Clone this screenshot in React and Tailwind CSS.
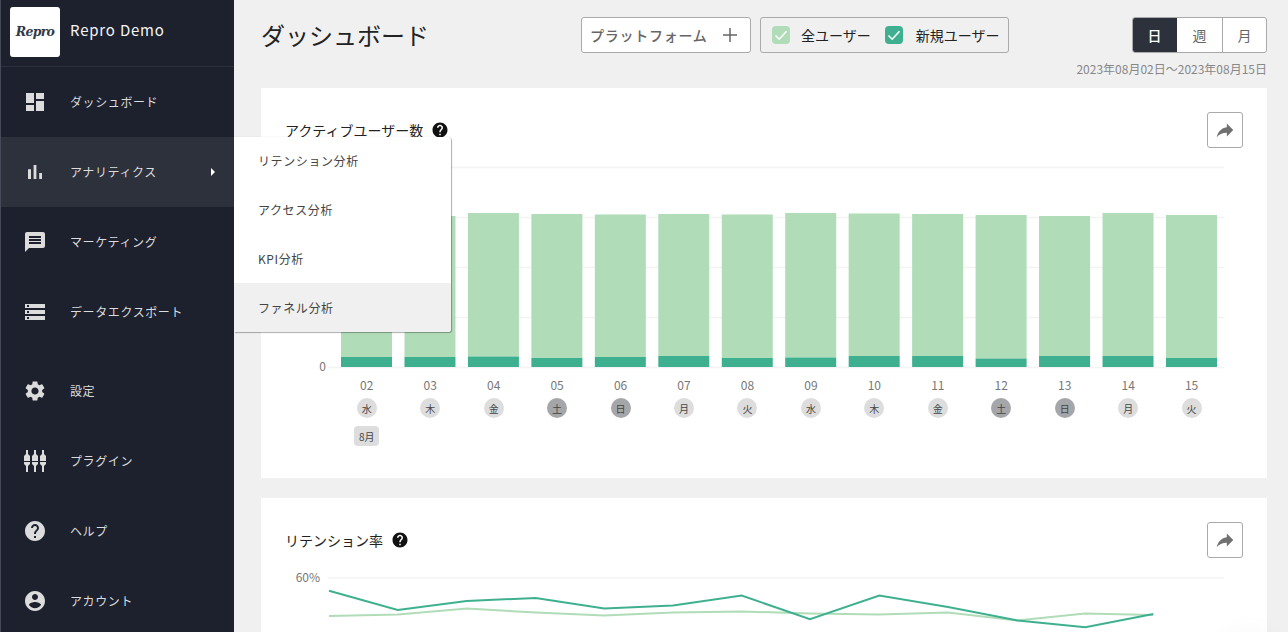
const P = {
  dashboard: "M3 13h8V3H3v10zm0 8h8v-6H3v6zm10 0h8V11h-8v10zm0-18v6h8V3h-8z",
  bars: "M5 9.2h3V19H5zM10.6 5h2.8v14h-2.8zm5.6 8H19v6h-2.8z",
  chat: "M20 2H4c-1.1 0-1.99.9-1.99 2L2 22l4-4h14c1.1 0 2-.9 2-2V4c0-1.1-.9-2-2-2zM6 12h12v2H6v-2zm0-3h12v2H6V9zm0-3h12v2H6V6z",
  storage: "M2 20h20v-4H2v4zm2-3h2v2H4v-2zM2 4v4h20V4H2zm4 3H4V5h2v2zm-4 7h20v-4H2v4zm2-3h2v2H4v-2z",
  gear: "M19.14 12.94c.04-.3.06-.61.06-.94 0-.32-.02-.64-.07-.94l2.03-1.58c.18-.14.23-.41.12-.61l-1.92-3.32c-.12-.22-.37-.29-.59-.22l-2.39.96c-.5-.38-1.03-.7-1.62-.94l-.36-2.54c-.04-.24-.24-.41-.48-.41h-3.84c-.24 0-.43.17-.47.41l-.36 2.54c-.59.24-1.13.57-1.62.94l-2.39-.96c-.22-.08-.47 0-.59.22L2.74 8.87c-.12.21-.08.47.12.61l2.03 1.58c-.05.3-.09.63-.09.94s.02.64.07.94l-2.03 1.58c-.18.14-.23.41-.12.61l1.92 3.32c.12.22.37.29.59.22l2.39-.96c.5.38 1.03.7 1.62.94l.36 2.54c.05.24.24.41.48.41h3.84c.24 0 .44-.17.47-.41l.36-2.54c.59-.24 1.13-.56 1.62-.94l2.39.96c.22.08.47 0 .59-.22l1.92-3.32c.12-.22.07-.47-.12-.61l-2.01-1.58zM12 15.6c-1.98 0-3.6-1.62-3.6-3.6s1.62-3.6 3.6-3.6 3.6 1.62 3.6 3.6-1.62 3.6-3.6 3.6z",
  plugin: "M3 1h2v4H3zM11 1h2v4h-2zM19 1h2v4h-2zM1 7l2-2h2l2 2v5H1zM9 7l2-2h2l2 2v5H9zM17 7l2-2h2l2 2v5h-6zM1 13h6v2l-2 2v6H3v-6l-2-2zM9 13h6v2l-2 2v6h-2v-6l-2-2zM17 13h6v2l-2 2v6h-2v-6l-2-2z",
  help: "M12 2C6.48 2 2 6.48 2 12s4.48 10 10 10 10-4.48 10-10S17.52 2 12 2zm1 17h-2v-2h2v2zm2.07-7.75l-.9.92C13.45 12.9 13 13.5 13 15h-2v-.5c0-1.1.45-2.1 1.17-2.83l1.24-1.26c.37-.36.59-.86.59-1.41 0-1.1-.9-2-2-2s-2 .9-2 2H8c0-2.21 1.79-4 4-4s4 1.79 4 4c0 .88-.36 1.68-.93 2.25z",
  account: "M12 2C6.48 2 2 6.48 2 12s4.48 10 10 10 10-4.48 10-10S17.52 2 12 2zm0 3c1.66 0 3 1.34 3 3s-1.34 3-3 3-3-1.34-3-3 1.34-3 3-3zm0 14.2c-2.5 0-4.71-1.28-6-3.22.03-1.99 4-3.08 6-3.08 1.99 0 5.97 1.09 6 3.08-1.29 1.94-3.5 3.22-6 3.22z",
  share: "M14 9V5l7 7-7 7v-4.1c-5 0-8.5 1.6-11 5.1 1-5 4-10 11-11z",
};

function Icon({ d, className = "w-6 h-6" }) {
  return (
    <svg viewBox="0 0 24 24" className={className} fill="currentColor">
      <path d={d} />
    </svg>
  );
}

function NavItem({ icon, label, active, arrow }) {
  return (
    <div className={`h-[70px] shrink-0 flex items-center pl-[22px] pr-5 text-[#dcdcdc] ${active ? "bg-[#2d313c]" : ""}`}>
      <Icon d={icon} />
      <span className="ml-[23px] text-xs tracking-[0.6px] flex-1">{label}</span>
      {arrow && (
        <svg viewBox="0 0 4 8" className="w-1 h-2 -mr-[1px]" fill="#ffffff">
          <path d="M0 0l4 4-4 4z" />
        </svg>
      )}
    </div>
  );
}

function Check({ color }) {
  return (
    <span className={`w-[18px] h-[18px] rounded-sm flex items-center justify-center ${color}`}>
      <svg viewBox="0 0 18 18" className="w-[18px] h-[18px]" fill="none" stroke="#ffffff" strokeWidth="1.6">
        <path d="M3.5 9.5l3.7 3.7 7.3-8" />
      </svg>
    </span>
  );
}

function CardHead({ title }) {
  return (
    <div className="flex items-center pl-6 pr-6 pt-6 h-[60px]">
      <span className="text-sm text-[#222222]">{title}</span>
      <Icon d={P.help} className="w-[18px] h-[18px] ml-2 text-[#111111]" />
      <button className="ml-auto w-9 h-9 bg-white border border-[#aaaaaa] rounded-[3px] flex items-center justify-center text-[#707070]">
        <Icon d={P.share} className="w-[22px] h-[22px]" />
      </button>
    </div>
  );
}

const tops = [216, 216, 213, 214, 214.5, 214, 214.5, 213, 213.5, 214, 215, 216, 213, 215];
const mids = [357, 357, 356.5, 358, 357, 356, 358, 357.5, 356, 356, 358.5, 356, 356, 358];
const days = ["02", "03", "04", "05", "06", "07", "08", "09", "10", "11", "12", "13", "14", "15"];
const wd = ["水", "木", "金", "土", "日", "月", "火", "水", "木", "金", "土", "日", "月", "火"];

const green = "329,590.7 397.7,610 466.7,601 535.7,598 604.3,608.5 673,605.5 741.7,595.5 810,619.3 879.3,595.5 948,607 1017.7,620.5 1085.3,627.3 1153.3,614";
const light = "329,616 398,614.5 467,608.5 536,612.5 604,615.5 673,612.5 742,611.5 810,613.5 879,614.5 948,612.5 1017,620.5 1085,613.5 1153,615";

const nav1 = [
  { icon: P.dashboard, label: "ダッシュボード" },
  { icon: P.bars, label: "アナリティクス", active: true, arrow: true },
  { icon: P.chat, label: "マーケティング" },
  { icon: P.storage, label: "データエクスポート" },
];
const nav2 = [
  { icon: P.gear, label: "設定" },
  { icon: P.plugin, label: "プラグイン" },
  { icon: P.help, label: "ヘルプ" },
  { icon: P.account, label: "アカウント" },
];
const menu = ["リテンション分析", "アクセス分析", "KPI分析", "ファネル分析"];

export default function App() {
  return (
    <div className="relative h-screen w-full overflow-hidden flex bg-[#f0f0f0] font-['Noto_Sans_CJK_JP','Noto_Sans',sans-serif]">
      <aside className="w-[234px] shrink-0 h-full bg-[#1d212d] border-l border-[#444a57] flex flex-col overflow-hidden">
        <div className="h-[67px] shrink-0 border-b border-[#2d313c] flex items-center pl-[9px] pb-[2px]">
          <div className="w-[50px] h-[50px] bg-white rounded-[3px] flex items-center justify-center">
            <span className="font-['DejaVu_Serif',serif] font-bold italic text-[12.5px] tracking-[-0.7px] text-[#333a48]">Repro</span>
          </div>
          <span className="ml-[10px] mb-[3px] text-[#f4f4f4] text-[15px] tracking-[0.8px]">Repro Demo</span>
        </div>
        {nav1.map((n) => (
          <NavItem key={n.label} {...n} />
        ))}
        <div className="h-[9px] shrink-0" />
        {nav2.map((n) => (
          <NavItem key={n.label} {...n} />
        ))}
      </aside>

      <main className="flex-1 min-w-0 pl-[27px] pr-[21px] pt-[17px]">
        <div className="flex items-start">
          <h1 className="w-[320px] h-9 text-2xl leading-9 text-[#222222]">ダッシュボード</h1>
          <button className="w-[170px] h-9 bg-white border border-[#aaaaaa] rounded-[3px] flex items-center pl-2 pr-3 text-[#666666]">
            <span className="text-sm font-medium tracking-[0.75px] flex-1 text-left">プラットフォーム</span>
            <svg viewBox="0 0 16 16" className="w-4 h-4" stroke="#666666" strokeWidth="1.5" fill="none">
              <path d="M8 1v14M1 8h14" />
            </svg>
          </button>
          <div className="ml-[9px] w-[249px] h-9 border border-[#aaaaaa] rounded-[3px] flex items-center pl-[11px] text-sm text-[#222222]">
            <Check color="bg-[#b0dcb8]" />
            <span className="ml-[11px]">全ユーザー</span>
            <span className="w-[14px]" />
            <Check color="bg-[#3fb08f]" />
            <span className="ml-[13px]">新規ユーザー</span>
          </div>
          <div className="ml-auto w-[135px] h-9 bg-white border border-[#aaaaaa] rounded-[3px] flex overflow-hidden text-sm text-[#666666]">
            <span className="-my-px -ml-px w-[45px] bg-[#2d313c] text-white font-medium flex items-center justify-center">日</span>
            <span className="w-[45px] flex items-center justify-center">週</span>
            <span className="flex-1 border-l border-[#aaaaaa] flex items-center justify-center">月</span>
          </div>
        </div>
        <div className="mt-[7px] h-[18px] text-right text-xs leading-[18px] text-[#888888]">2023年08月02日〜2023年08月15日</div>

        <section className="mt-[10px] h-[390px] bg-white">
          <CardHead title="アクティブユーザー数" />
          <svg viewBox="261 148 1006 228" className="block w-full h-[228px]">
            {[167.5, 217.5, 267.5, 317.5, 367.5].map((y) => (
              <line key={y} x1="328" x2="1224" y1={y} y2={y} stroke="#f3f3f3" strokeWidth="1.5" />
            ))}
            {tops.map((t, i) => {
              const x = 341 + 63.46 * i;
              return (
                <g key={i}>
                  <rect x={x} y={t} width="51" height={mids[i] - t} fill="#b0dcb8" />
                  <rect x={x} y={mids[i]} width="51" height={367 - mids[i]} fill="#3fb08f" />
                </g>
              );
            })}
            <text x="322.5" y="371" textAnchor="middle" fontSize="12" fill="#777777">0</text>
          </svg>
          <div className="flex pl-[74px]">
            {days.map((d, i) => (
              <div key={d} className="w-[63.46px] shrink-0 flex flex-col items-center">
                <span className="h-[18px] text-xs leading-[18px] text-[#777777]">{d}</span>
                <span className={`mt-1 w-5 h-5 rounded-full flex items-center justify-center text-[10px] text-[#444444] ${wd[i] === "土" || wd[i] === "日" ? "bg-[#a5a6a9]" : "bg-[#dddddd]"}`}>{wd[i]}</span>
                {i === 0 && (
                  <span className="mt-2 w-[25px] h-5 rounded-[4px] bg-[#dddddd] flex items-center justify-center text-[10px] text-[#444444]">8月</span>
                )}
              </div>
            ))}
          </div>
        </section>

        <section className="mt-5 h-[200px] bg-white">
          <CardHead title="リテンション率" />
          <svg viewBox="261 558 1006 76" className="block w-full h-[76px]">
            <line x1="328" x2="1224" y1="578" y2="578" stroke="#f3f3f3" strokeWidth="1.5" />
            <text x="320" y="582" textAnchor="end" fontSize="12" fill="#777777">60%</text>
            <polyline points={light} fill="none" stroke="#b0dcb8" strokeWidth="2" />
            <polyline points={green} fill="none" stroke="#3fb08f" strokeWidth="2" />
          </svg>
        </section>
      </main>

      <div className="absolute left-[234px] top-[137px] w-[217px] h-[195px] bg-white rounded-r-[3px] shadow-[1px_1px_1px_rgba(0,0,0,0.3),0_0_1px_rgba(0,0,0,0.25)] flex flex-col overflow-hidden">
        {menu.map((m, i) => (
          <div key={m} className={`flex-1 flex items-center pl-6 text-xs tracking-[0.6px] text-[#444444] ${i === 3 ? "bg-[#f0f0f0]" : ""}`}>{m}</div>
        ))}
      </div>
      <div className="absolute left-[1225px] top-[640px] w-[50px] h-[50px] rounded-full shadow-[0_0_36px_rgba(0,0,0,0.07)]" />
    </div>
  );
}
